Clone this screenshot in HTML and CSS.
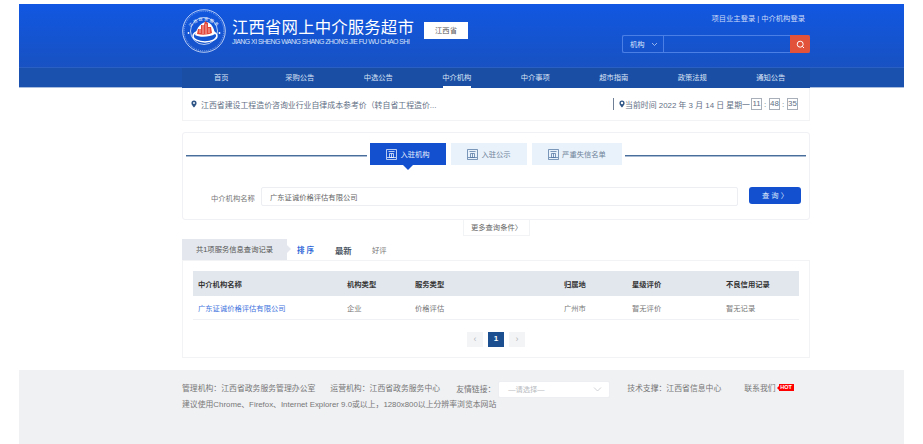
FILE: index.html
```html
<!DOCTYPE html>
<html lang="zh-CN">
<head>
    <meta charset="UTF-8">
    <title>江西省网上中介服务超市</title>
    <link rel="stylesheet" href="styles.css">
</head>
<body>

<header class="header">
    <div class="header-top">
        <svg class="logo" width="44" height="44" viewBox="0 0 44 44">
            <defs>
                <path id="logoArc" d="M6 24 A16.5 16.5 0 0 1 38 24"/>
            </defs>
            <circle cx="22" cy="22" r="21.3" fill="none" stroke="#dfe8fb" stroke-width="0.8"/>
            <circle cx="22" cy="22" r="19.8" fill="none" stroke="#dfe8fb" stroke-width="0.5" stroke-dasharray="1 1"/>
            <circle cx="22" cy="22" r="13.5" fill="none" stroke="#dfe8fb" stroke-width="0.8"/>
            <text class="logo-text"><textPath href="#logoArc" startOffset="50%" text-anchor="middle">江西政务服务</textPath></text>
            <circle cx="6.5" cy="24" r="0.9" fill="#fff"/>
            <circle cx="37.5" cy="24" r="0.9" fill="#fff"/>
            <ellipse cx="23" cy="27" rx="12" ry="6" fill="none" stroke="#fff" stroke-width="1.4"/>
            <path d="M13 26 C15 18 20 13 24 13 C29 13 32 19 33 25 C28 28 18 29 13 26Z" fill="#fff"/>
            <path d="M15 25 L16 20 L19 20 L19 16 L22 16 L23 12 L26 14 L26 18 L29 18 L30 24 C26 26 20 26 15 25Z" fill="#e2453a"/>
            <path d="M18 24 V19 M21 25 V16 M24 25 V15 M27 24 V19" stroke="#fff" stroke-width="0.6"/>
        </svg>
        <div class="brand">
            <div class="brand-name">江西省网上中介服务超市</div>
            <div class="brand-pinyin">JIANG XI SHENG WANG SHANG ZHONG JIE FU WU CHAO SHI</div>
        </div>
        <div class="province">江西省</div>
        <div class="header-right">
            <div class="login-links">项目业主登录 | 中介机构登录</div>
            <div class="search">
                <div class="search-type">机构
                    <svg width="7" height="5" viewBox="0 0 7 5"><path d="M1 1l2.5 2.5 2.5-2.5" fill="none" stroke="#b9cdf5" stroke-width="0.8"/></svg>
                </div>
                <div class="search-input"></div>
                <div class="search-btn">
                    <svg width="9" height="9" viewBox="0 0 9 9"><circle cx="4.2" cy="4.2" r="3" fill="none" stroke="#fff" stroke-width="1"/><path d="M6.4 6.4l1.6 1.6" stroke="#fff"/></svg>
                </div>
            </div>
        </div>
    </div>
    <nav class="nav">
        <div class="nav-inner">
            <a class="nav-item">首页</a>
            <a class="nav-item">采购公告</a>
            <a class="nav-item">中选公告</a>
            <a class="nav-item active">中介机构</a>
            <a class="nav-item">中介事项</a>
            <a class="nav-item">超市指南</a>
            <a class="nav-item">政策法规</a>
            <a class="nav-item">通知公告</a>
        </div>
    </nav>
</header>

<main class="main">
    <section class="notice">
        <svg class="pin" width="6" height="8" viewBox="0 0 7 9"><path d="M3.5 0.5a3 3 0 0 1 3 3c0 2-3 5-3 5s-3-3-3-5a3 3 0 0 1 3-3z" fill="#2f5586"/><circle cx="3.5" cy="3.4" r="1.1" fill="#fff"/></svg>
        <div class="notice-text">江西省建设工程造价咨询业行业自律成本参考价（转自省工程造价...</div>
        <div class="clock">
            <svg width="6" height="8" viewBox="0 0 7 9"><path d="M3.5 0.5a3 3 0 0 1 3 3c0 2-3 5-3 5s-3-3-3-5a3 3 0 0 1 3-3z" fill="#2f5586"/><circle cx="3.5" cy="3.4" r="1.4" fill="#fff"/></svg>
            <span>当前时间 2022 年 3 月 14 日 星期一</span>
            <b class="digit">11</b><i>:</i><b class="digit">48</b><i>:</i><b class="digit">35</b>
        </div>
    </section>

    <section class="query">
        <div class="tabs">
            <div class="tab-line"></div>
            <div class="tab active">
                <svg class="tab-icon" width="11" height="11" viewBox="0 0 11 11"><path d="M0.5 0.5h10v10h-10zM2.5 2.5h6M3.5 4.5h4v4h-4zM5.5 4.5v4M1 8.5h9" fill="none" stroke="currentColor" stroke-width="0.7"/></svg>
                入驻机构
            </div>
            <div class="tab">
                <svg class="tab-icon" width="11" height="11" viewBox="0 0 11 11"><path d="M0.5 0.5h10v10h-10zM2.5 2.5h6M3.5 4.5h4v4h-4zM5.5 4.5v4M1 8.5h9" fill="none" stroke="currentColor" stroke-width="0.7"/></svg>
                入驻公示
            </div>
            <div class="tab wide">
                <svg class="tab-icon" width="11" height="11" viewBox="0 0 11 11"><path d="M0.5 0.5h10v10h-10zM2.5 2.5h6M3.5 4.5h4v4h-4zM5.5 4.5v4M1 8.5h9" fill="none" stroke="currentColor" stroke-width="0.7"/></svg>
                严重失信名单
            </div>
            <div class="tab-line"></div>
        </div>
        <div class="query-form">
            <label class="query-label">中介机构名称</label>
            <div class="query-input">广东证诚价格评估有限公司</div>
            <div class="query-btn">查 询 〉</div>
        </div>
    </section>
    <div class="more-wrap"><div class="more">更多查询条件〉</div></div>

    <div class="result-bar">
        <div class="result-count">共1项服务信息查询记录</div>
        <span class="sort-label">排 序</span>
        <span class="sort-new">最新</span>
        <span class="sort-good">好评</span>
    </div>
    <section class="result">
        <div class="row head">
            <div class="col-name">中介机构名称</div>
            <div class="col-type">机构类型</div>
            <div class="col-service">服务类型</div>
            <div class="col-place">归属地</div>
            <div class="col-star">星级评价</div>
            <div class="col-bad">不良信用记录</div>
        </div>
        <div class="row">
            <div class="col-name link">广东证诚价格评估有限公司</div>
            <div class="col-type">企业</div>
            <div class="col-service">价格评估</div>
            <div class="col-place">广州市</div>
            <div class="col-star">暂无评价</div>
            <div class="col-bad">暂无记录</div>
        </div>
        <div class="pager">
            <span class="page-btn">‹</span>
            <span class="page-btn current">1</span>
            <span class="page-btn">›</span>
        </div>
    </section>
</main>

<footer class="footer">
    <div class="footer-inner">
        <div class="footer-row">
            <span class="f-admin">管理机构：江西省政务服务管理办公室</span>
            <span class="f-run">运营机构：江西省政务服务中心</span>
            <span class="f-link">友情链接：</span>
            <div class="f-select">—请选择—
                <svg width="9" height="5" viewBox="0 0 9 5"><path d="M1 0.5l3.5 3.5 3.5-3.5" fill="none" stroke="#c4c7cc" stroke-width="0.8"/></svg>
            </div>
            <span class="f-tech">技术支撑：江西省信息中心</span>
            <span class="f-contact">联系我们</span>
            <span class="hot">HOT</span>
        </div>
        <div class="footer-tip">建议使用Chrome、Firefox、Internet Explorer 9.0或以上，1280x800以上分辨率浏览本网站</div>
    </div>
</footer>

</body>
</html>
```

FILE: styles.css
```css
* {
    box-sizing: border-box;
}

body {
    margin: 0;
    padding: 4px 19px 0;
    height: 444px;
    overflow: hidden;
    background-color: #fff;
    font-family: "Liberation Sans", "Noto Sans CJK SC", sans-serif;
    font-size: 7.3px;
    color: #666;
}

.header {
    height: 84px;
    background: linear-gradient(#1157e2, #1a50b8);
    border-bottom: 1px solid #a9bddf;
}

.header-top {
    height: 63px;
    margin-left: 163px;
    width: 628px;
    display: flex;
    color: #fff;
}

.logo {
    margin-top: 5px;
    flex: none;
}

.logo-text {
    font-size: 4px;
    fill: #fff;
    letter-spacing: 1.2px;
}

.brand {
    margin-left: 6px;
    margin-top: 14px;
    width: 192px;
}

.brand-name {
    font-size: 16.4px;
    line-height: 19px;
    white-space: nowrap;
    letter-spacing: 0.15px;
}

.brand-pinyin {
    font-size: 7px;
    line-height: 9px;
    white-space: nowrap;
    letter-spacing: -0.58px;
    color: #d5e1f9;
}

.province {
    width: 44px;
    height: 17px;
    margin-top: 18px;
    background-color: #fff;
    color: #555;
    line-height: 17px;
    text-align: center;
}

.header-right {
    flex: 1;
    display: flex;
    flex-direction: column;
    align-items: flex-end;
}

.login-links {
    margin-top: 9px;
    margin-right: 5px;
    line-height: 11px;
    color: #cfdcf8;
}

.search {
    margin-top: 11px;
    height: 18px;
    width: 188px;
    display: flex;
    border: 1px solid #4b7fe6;
    border-right: 0;
    border-radius: 2px;
}

.search-type {
    width: 41px;
    display: flex;
    align-items: center;
    justify-content: space-between;
    padding: 0 5px 0 7px;
    border-right: 1px solid #4b7fe6;
    color: #dbe5fa;
}

.search-input {
    flex: 1;
}

.search-btn {
    width: 20px;
    margin: -1px 0;
    background-color: #e2513a;
    border-radius: 0 2px 2px 0;
    display: flex;
    align-items: center;
    justify-content: center;
}

.nav {
    height: 20px;
    background-color: #1a50ae;
    border-top: 1px solid #2a60c4;
}

.nav-inner {
    width: 628px;
    margin-left: 163px;
    height: 20px;
    display: flex;
    background-color: #1a4ea4;
}

.nav-item {
    flex: 1;
    position: relative;
    text-align: center;
    line-height: 20px;
    color: #dbe4f6;
}

.nav-item.active::after {
    content: "";
    position: absolute;
    left: 25px;
    right: 25px;
    bottom: 0;
    height: 2px;
    background-color: #fff;
}

.main {
    width: 628px;
    margin-left: 163px;
}

.notice {
    height: 33px;
    display: flex;
    align-items: center;
    padding: 0 10px 0 8px;
    border: 1px solid #f2f3f5;
    border-top: 0;
    color: #5f6f85;
    font-size: 7.9px;
}

.notice-text {
    margin-left: 4px;
    width: 412px;
    white-space: nowrap;
}

.clock {
    display: flex;
    align-items: center;
    border-left: 1px solid #6f7f95;
    height: 12px;
    padding-left: 5px;
    white-space: nowrap;
    color: #5f6f85;
}

.digit {
    margin-left: 1px;
    width: 11px;
    height: 12px;
    border: 1px solid #a9afb8;
    font-weight: normal;
    line-height: 10px;
    text-align: center;
}

.clock i {
    font-style: normal;
    width: 6px;
    text-align: center;
}

.query {
    height: 88px;
    margin-top: 11px;
    padding: 10px 3px 0;
    border: 1px solid #f0f1f4;
    border-radius: 3px;
}

.tabs {
    display: flex;
    align-items: flex-start;
}

.tab-line {
    flex: 1;
    height: 1px;
    margin-top: 12px;
    background-color: #4a6e9c;
    box-shadow: 0 1px 0 #a9bbd2;
}

.tab {
    width: 76px;
    height: 22px;
    margin-left: 5px;
    display: flex;
    align-items: center;
    justify-content: center;
    background-color: #e9f2fb;
    color: #6f8299;
    position: relative;
}

.tab-line + .tab {
    margin-left: 3px;
}

.tab.wide {
    width: 90px;
    margin-right: 3px;
}

.tab.active {
    background-color: #1250d0;
    color: #e6edfb;
}

.tab.active::after {
    content: "";
    position: absolute;
    left: 50%;
    bottom: -5px;
    margin-left: -5px;
    border-left: 5px solid transparent;
    border-right: 5px solid transparent;
    border-top: 5px solid #1250d0;
}

.tab-icon {
    margin-right: 3px;
    color: #4a6e9c;
}

.tab.active .tab-icon {
    color: #fff;
}

.query-form {
    margin-top: 22px;
    display: flex;
    align-items: flex-start;
    padding: 0 5px 0 25px;
}

.query-label {
    width: 46px;
    color: #777;
    white-space: nowrap;
    line-height: 23px;
}

.query-input {
    width: 477px;
    height: 19px;
    margin-left: 4px;
    padding-left: 8px;
    border: 1px solid #eceef1;
    border-radius: 2px;
    line-height: 19px;
    color: #666;
}

.query-btn {
    width: 52px;
    height: 17px;
    margin-left: 11px;
    border-radius: 3px;
    background-color: #1250d0;
    color: #dfe8fa;
    line-height: 17px;
    text-align: center;
}

.more-wrap {
    display: flex;
    padding-left: 281px;
}

.more {
    width: 67px;
    height: 16px;
    border: 1px solid #f2f3f5;
    border-top: 0;
    line-height: 15px;
    text-align: center;
    white-space: nowrap;
    color: #666;
}

.result-bar {
    height: 21px;
    margin-top: 3px;
    display: flex;
    align-items: center;
}

.result-count {
    width: 105px;
    height: 21px;
    position: relative;
    padding-left: 14px;
    background-color: #e4e8ee;
    line-height: 21px;
    color: #555;
    white-space: nowrap;
}

.result-count::after {
    content: "";
    position: absolute;
    left: 105px;
    top: 6px;
    border-top: 4px solid transparent;
    border-bottom: 4px solid transparent;
    border-left: 4px solid #e4e8ee;
}

.sort-label {
    margin-left: 10px;
    width: 38px;
    color: #2f68d8;
    font-weight: bold;
    font-size: 7.5px;
}

.sort-new {
    width: 37px;
    font-size: 8.4px;
    font-weight: bold;
    color: #4a5462;
}

.sort-good {
    color: #777;
}

.result {
    height: 98px;
    padding: 10px 10px 0;
    border: 1px solid #f2f3f5;
}

.row {
    height: 24px;
    display: flex;
    align-items: center;
    padding-left: 5px;
    border-bottom: 1px solid #f0f1f4;
    color: #777;
}

.row.head {
    height: 25px;
    background-color: #e2e6ed;
    border-bottom: 0;
    color: #333;
    font-weight: bold;
}

.col-name {
    width: 149px;
}

.col-type {
    width: 68px;
}

.col-service {
    width: 149px;
}

.col-place {
    width: 68px;
}

.col-star {
    width: 94px;
}

.link {
    color: #3f74de;
}

.pager {
    margin-top: 12px;
    display: flex;
    justify-content: center;
    gap: 5px;
}

.page-btn {
    width: 16px;
    height: 15px;
    background-color: #f3f4f5;
    color: #b5b8bd;
    line-height: 14px;
    text-align: center;
    font-size: 9px;
}

.page-btn.current {
    background-color: #1c4f8f;
    color: #fff;
    font-weight: bold;
    font-size: 8px;
}

.footer {
    height: 74px;
    margin-top: 12px;
    background-color: #f0f1f3;
}

.footer-inner {
    margin-left: 163px;
    padding-top: 11px;
    color: #777;
    font-size: 7.85px;
}

.footer-row {
    display: flex;
    align-items: flex-start;
    height: 17px;
    line-height: 16px;
    white-space: nowrap;
}

.f-run {
    margin-left: 15px;
}

.f-link {
    margin-left: 16px;
    margin-top: 1px;
    width: 38px;
}

.f-select {
    width: 112px;
    height: 17px;
    margin-left: 4px;
    padding: 0 7px 0 9px;
    display: flex;
    align-items: center;
    justify-content: space-between;
    background-color: #fff;
    border: 1px solid #eceef1;
    border-radius: 2px;
    color: #b8bbc0;
    font-size: 7.3px;
}

.f-tech {
    margin-left: 17px;
}

.f-contact {
    margin-left: 23px;
}

.hot {
    margin-left: 3px;
    margin-top: 3px;
    width: 15px;
    height: 7px;
    position: relative;
    background-color: #f00;
    color: #fff;
    font-size: 5.5px;
    font-weight: bold;
    line-height: 7px;
    text-align: center;
}

.hot::before {
    content: "";
    position: absolute;
    left: -2px;
    top: 2px;
    border-top: 2px solid transparent;
    border-bottom: 2px solid transparent;
    border-right: 2px solid #f00;
}

.footer-tip {
    margin-top: 1px;
    line-height: 12px;
    white-space: nowrap;
}
```
